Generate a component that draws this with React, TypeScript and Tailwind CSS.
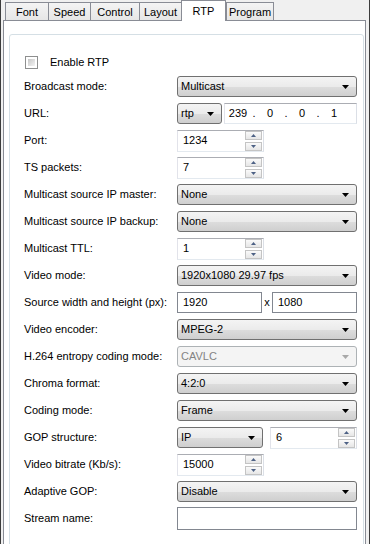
import React from "react";

function Arrow({ disabled }: { disabled?: boolean }) {
  return (
    <svg width="7" height="4" viewBox="0 0 7 4">
      <path d="M0 0H7L3.5 4Z" fill={disabled ? "#a8a8a8" : "#000"} />
    </svg>
  );
}

function Select({ value, className = "w-full", disabled }: { value: string; className?: string; disabled?: boolean }) {
  return (
    <div
      className={
        "h-[21px] flex items-center justify-between rounded-[3px] border pl-[3px] pr-[7px] " +
        (disabled
          ? "border-[#adb2b5] bg-[#f4f4f4] text-[#838383] "
          : "border-[#707070] bg-[linear-gradient(to_bottom,#f4f4f4_0%,#ebebeb_50%,#dddddd_51%,#cfcfcf_100%)] ") +
        className
      }
    >
      <span>{value}</span>
      <Arrow disabled={disabled} />
    </div>
  );
}

function SpinArrow({ up }: { up?: boolean }) {
  return (
    <svg width="5" height="3" viewBox="0 0 5 3">
      <path d={up ? "M0 3H5L2.5 0Z" : "M0 0H5L2.5 3Z"} fill="#4d6185" />
    </svg>
  );
}

function Spin({ value, className = "w-[87px]" }: { value: string; className?: string }) {
  return (
    <div
      className={
        "h-[22px] flex items-center justify-between bg-white border border-[#abadb3] border-l-[#e2e3ea] border-r-[#dbdfe6] border-b-[#e3e9ef] pl-[5px] pr-px " +
        className
      }
    >
      <span>{value}</span>
      <div className="flex flex-col gap-[2px]">
        <div className="w-[17px] h-[9px] flex items-center justify-center border border-[#c4c4c4] bg-[linear-gradient(to_bottom,#fafafa,#e6e6e6)]">
          <SpinArrow up />
        </div>
        <div className="w-[17px] h-[9px] flex items-center justify-center border border-[#c4c4c4] bg-[linear-gradient(to_bottom,#fafafa,#e6e6e6)]">
          <SpinArrow />
        </div>
      </div>
    </div>
  );
}

function TextBox({ value = "", className = "w-full" }: { value?: string; className?: string }) {
  return (
    <div className={"h-[21px] flex items-center bg-white border border-[#828790] pl-[5px] " + className}>
      {value}
    </div>
  );
}

function Row({ label, children }: { label: string; children: React.ReactNode }) {
  return (
    <div className="h-[27px] flex items-center">
      <div className="w-[153px]">{label}</div>
      <div className="w-[180px] flex items-center">{children}</div>
    </div>
  );
}

const tabs = [
  { name: "Font", w: "w-[43px]" },
  { name: "Speed", w: "w-[42px]" },
  { name: "Control", w: "w-[49px]" },
  { name: "Layout", w: "w-[42px]" },
  { name: "RTP", w: "w-[45px]", active: true },
  { name: "Program", w: "w-[48px]" },
];

export default function App() {
  return (
    <div className="w-[374px] h-[544px] bg-white overflow-hidden font-['Liberation_Sans',Arial,sans-serif] text-[11px] text-black leading-none">
      <div className="w-[370px] h-full border-x border-[#3c3c3c] bg-[#f0f0f0] flex flex-col">
        <div className="h-[22px] flex items-end pl-[4px] relative z-10">
          {tabs.map((t, i) =>
            t.active ? (
              <div
                key={t.name}
                className={"h-[21px] -mb-px bg-white border-x border-t border-[#898c95] flex justify-center pt-[5px] " + t.w}
              >
                {t.name}
              </div>
            ) : (
              <div
                key={t.name}
                className={
                  "h-[18px] pt-px border-t border-l border-[#898c95] bg-[linear-gradient(to_bottom,#f4f4f4,#e6e6e6)] flex items-center justify-center " +
                  (i === tabs.length - 1 ? "border-r " : "") +
                  t.w
                }
              >
                {t.name}
              </div>
            )
          )}
        </div>
        <div className="ml-[2px] w-[363px] flex-1 bg-white border border-[#898c95] pt-[13px] pl-[5px] pr-px">
          <div className="border border-[#d5dfe5] rounded-[3px] pt-[17px] pl-[14px] pr-[6px] pb-[40px]">
            <div className="h-[20px] flex items-center">
              <div className="w-[13px] h-[13px] ml-px border border-[#8e8f8f] bg-white p-[2px]">
                <div className="w-full h-full bg-[linear-gradient(135deg,#c6c6c6,#f4f4f4)]" />
              </div>
              <span className="ml-[12px]">Enable RTP</span>
            </div>
            <div className="h-px" />
            <Row label="Broadcast mode:">
              <Select value="Multicast" />
            </Row>
            <Row label="URL:">
              <Select value="rtp" className="w-[45px]" />
              <div className="ml-[2px] w-[133px] h-[21px] flex items-center bg-white border border-[#abadb3] border-l-[#e2e3ea] border-r-[#dbdfe6] border-b-[#e3e9ef]">
                <span className="w-[26px] text-center">239</span>
                <span className="w-[6px] text-center">.</span>
                <span className="w-[26px] text-center">0</span>
                <span className="w-[6px] text-center">.</span>
                <span className="w-[26px] text-center">0</span>
                <span className="w-[6px] text-center">.</span>
                <span className="w-[26px] text-center">1</span>
              </div>
            </Row>
            <Row label="Port:">
              <Spin value="1234" />
            </Row>
            <Row label="TS packets:">
              <Spin value="7" />
            </Row>
            <Row label="Multicast source IP master:">
              <Select value="None" />
            </Row>
            <Row label="Multicast source IP backup:">
              <Select value="None" />
            </Row>
            <Row label="Multicast TTL:">
              <Spin value="1" />
            </Row>
            <Row label="Video mode:">
              <Select value="1920x1080 29.97 fps" />
            </Row>
            <Row label="Source width and height (px):">
              <TextBox value="1920" className="w-[85px]" />
              <span className="w-[10px] text-center">x</span>
              <TextBox value="1080" className="w-[85px]" />
            </Row>
            <Row label="Video encoder:">
              <Select value="MPEG-2" />
            </Row>
            <Row label="H.264 entropy coding mode:">
              <Select value="CAVLC" disabled />
            </Row>
            <Row label="Chroma format:">
              <Select value="4:2:0" />
            </Row>
            <Row label="Coding mode:">
              <Select value="Frame" />
            </Row>
            <Row label="GOP structure:">
              <Select value="IP" className="w-[86px]" />
              <Spin value="6" className="w-[87px] ml-[7px]" />
            </Row>
            <Row label="Video bitrate (Kb/s):">
              <Spin value="15000" />
            </Row>
            <Row label="Adaptive GOP:">
              <Select value="Disable" />
            </Row>
            <Row label="Stream name:">
              <TextBox className="w-full h-[23px]" />
            </Row>
          </div>
        </div>
      </div>
    </div>
  );
}
